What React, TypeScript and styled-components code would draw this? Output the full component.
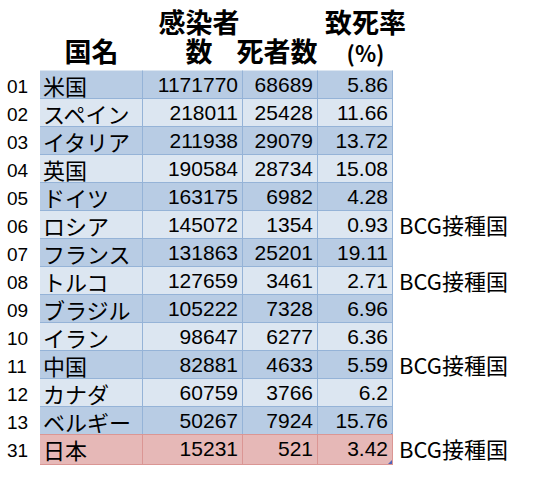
import React from "react";
import styled, { createGlobalStyle, css } from "styled-components";

const GlobalStyle = createGlobalStyle`
  body {
    margin: 0;
    background: #fff;
    color: #000;
    font-family: "Noto Sans CJK JP", "Liberation Sans", sans-serif;
  }
`;

const COLS = "40px 103px 100px 75px 75px auto";

const Page = styled.div`
  width: 535px;
  height: 504px;
  display: flex;
  flex-direction: column;
`;

const Header = styled.div`
  display: grid;
  grid-template-columns: ${COLS};
  padding-top: 7px;
  margin-bottom: 5px;
`;

const HeadCell = styled.div<{ $padL?: number; $padR?: number }>`
  display: flex;
  flex-direction: column;
  align-items: center;
  padding-left: ${(p) => p.$padL || 0}px;
  padding-right: ${(p) => p.$padR || 0}px;
  font-size: 27px;
  font-weight: bold;
`;

const HeadLine = styled.div`
  height: 29px;
  line-height: 29px;
  white-space: nowrap;
`;

const Percent = styled.span`
  font-size: 22px;
`;

const Table = styled.div`
  display: flex;
  flex-direction: column;
`;

type Tone = "dark" | "light" | "japan";

const fills: Record<Tone, string> = {
  dark: "#b8cce4",
  light: "#dce6f1",
  japan: "#e6b8b7",
};

const lines: Record<Tone, string> = {
  dark: "#95b3d7",
  light: "#95b3d7",
  japan: "#da9694",
};

const Row = styled.div<{ $last?: boolean }>`
  display: grid;
  grid-template-columns: ${COLS};
  height: ${(p) => (p.$last ? 29 : 28)}px;
`;

const Label = styled.div`
  font-family: "Liberation Sans", Arial, sans-serif;
  font-size: 19px;
  line-height: 28px;
  padding: 3px 0 0 7px;
`;

const Cell = styled.div<{
  $tone: Tone;
  $first?: boolean;
  $last?: boolean;
  $num?: boolean;
  $flag?: boolean;
}>`
  position: relative;
  box-sizing: border-box;
  background: ${(p) => fills[p.$tone]};
  border-top: 1px solid
    ${(p) => (p.$first ? "#dce6f1" : lines[p.$tone])};
  border-bottom: ${(p) => (p.$last ? `1px solid ${lines[p.$tone]}` : "none")};
  border-right: 1px solid ${(p) => lines[p.$tone]};
  line-height: 26px;
  padding-top: 1px;
  white-space: nowrap;
  ${(p) =>
    p.$num
      ? css`
          font-family: "Liberation Sans", Arial, sans-serif;
          font-size: 21px;
          text-align: right;
          padding-right: 4px;
        `
      : css`
          font-family: "Noto Sans CJK JP", sans-serif;
          font-size: 22px;
          padding-left: 3px;
        `}
  ${(p) =>
    p.$flag &&
    css`
      &::after {
        content: "";
        position: absolute;
        right: 0;
        bottom: 0;
        border-style: solid;
        border-width: 0 0 4px 4px;
        border-color: transparent transparent #4f63b8 transparent;
      }
    `}
`;

const Note = styled.div`
  font-family: "Noto Sans CJK JP", sans-serif;
  font-size: 22px;
  line-height: 28px;
  padding-left: 6px;
  white-space: nowrap;
`;

type Country = {
  no: string;
  name: string;
  cases: string;
  deaths: string;
  rate: string;
  bcg?: boolean;
};

const data: Country[] = [
  { no: "01", name: "米国", cases: "1171770", deaths: "68689", rate: "5.86" },
  { no: "02", name: "スペイン", cases: "218011", deaths: "25428", rate: "11.66" },
  { no: "03", name: "イタリア", cases: "211938", deaths: "29079", rate: "13.72" },
  { no: "04", name: "英国", cases: "190584", deaths: "28734", rate: "15.08" },
  { no: "05", name: "ドイツ", cases: "163175", deaths: "6982", rate: "4.28" },
  { no: "06", name: "ロシア", cases: "145072", deaths: "1354", rate: "0.93", bcg: true },
  { no: "07", name: "フランス", cases: "131863", deaths: "25201", rate: "19.11" },
  { no: "08", name: "トルコ", cases: "127659", deaths: "3461", rate: "2.71", bcg: true },
  { no: "09", name: "ブラジル", cases: "105222", deaths: "7328", rate: "6.96" },
  { no: "10", name: "イラン", cases: "98647", deaths: "6277", rate: "6.36" },
  { no: "11", name: "中国", cases: "82881", deaths: "4633", rate: "5.59", bcg: true },
  { no: "12", name: "カナダ", cases: "60759", deaths: "3766", rate: "6.2" },
  { no: "13", name: "ベルギー", cases: "50267", deaths: "7924", rate: "15.76" },
  { no: "31", name: "日本", cases: "15231", deaths: "521", rate: "3.42", bcg: true },
];

const App = () => {
  return (
    <Page>
      <GlobalStyle />
      <Header>
        <div />
        <HeadCell>
          <HeadLine />
          <HeadLine>国名</HeadLine>
        </HeadCell>
        <HeadCell $padL={12}>
          <HeadLine>感染者</HeadLine>
          <HeadLine>数</HeadLine>
        </HeadCell>
        <HeadCell $padR={7}>
          <HeadLine />
          <HeadLine>死者数</HeadLine>
        </HeadCell>
        <HeadCell $padL={20}>
          <HeadLine>致死率</HeadLine>
          <HeadLine>
            <Percent>(%)</Percent>
          </HeadLine>
        </HeadCell>
      </Header>
      <Table>
        {data.map((c, i) => {
          const last = i === data.length - 1;
          const tone: Tone = last ? "japan" : i % 2 === 0 ? "dark" : "light";
          const first = i === 0;
          return (
            <Row key={c.no} $last={last}>
              <Label>{c.no}</Label>
              <Cell $tone={tone} $first={first} $last={last}>
                {c.name}
              </Cell>
              <Cell $tone={tone} $first={first} $last={last} $num>
                {c.cases}
              </Cell>
              <Cell $tone={tone} $first={first} $last={last} $num>
                {c.deaths}
              </Cell>
              <Cell $tone={tone} $first={first} $last={last} $num $flag={i >= 12}>
                {c.rate}
              </Cell>
              <Note>{c.bcg ? "BCG接種国" : ""}</Note>
            </Row>
          );
        })}
      </Table>
    </Page>
  );
};

export default App;
